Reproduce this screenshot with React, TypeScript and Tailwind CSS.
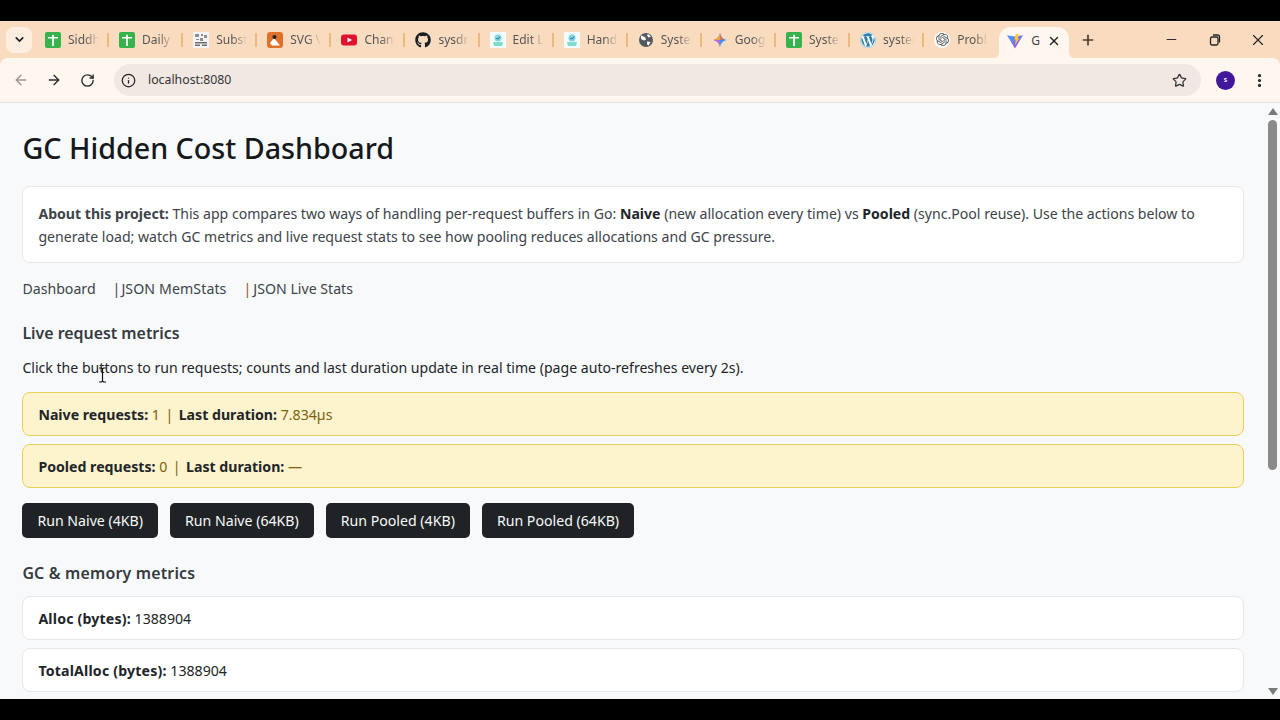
import { ArrowLeft, ArrowRight, RotateCw, Info, Star, EllipsisVertical, ChevronDown, Plus, X, Minus } from "lucide-react";
import { FaGithub, FaWordpress } from "react-icons/fa";
import { SiOpenai } from "react-icons/si";

function Sheet() {
  return (
    <svg width="16" height="16" viewBox="0 0 16 16">
      <rect width="16" height="16" rx="2" fill="#37b24d" />
      <path d="M3 5h4.100V2.800h1.800V5H13v1.600H8.900V14H7.100V6.600H3z" fill="#fff" />
    </svg>
  );
}

function Substack() {
  return (
    <svg width="16" height="16" viewBox="0 0 16 16">
      <rect width="16" height="16" fill="#f4f4f4" />
      <path d="M2 2h4v3H2zM8 2h2v2H8zM11 3h3v3h-3zM3 7h3v1H3zM7 6h3v3H7z" fill="#8d8d8d" />
      <path d="M2 10h12v1.500H2zM2 12.500h5V14H2zM9 12.500h5V14H9z" fill="#6a6f75" />
    </svg>
  );
}

function SvgIcon() {
  return (
    <svg width="16" height="16" viewBox="0 0 16 16">
      <rect width="16" height="16" rx="3" fill="#e0702a" />
      <path d="M3 11 7 6l6 7.500H5z" fill="#fff" />
      <circle cx="7.500" cy="5" r="2" fill="#222" />
    </svg>
  );
}

function YouTube() {
  return (
    <svg width="16" height="16" viewBox="0 0 16 16">
      <rect y="2.500" width="16" height="11" rx="3" fill="#e0102f" />
      <path d="M6.500 5.500 11 8l-4.500 2.500z" fill="#fff" />
    </svg>
  );
}

function Edit() {
  return (
    <svg width="16" height="16" viewBox="0 0 16 16">
      <rect width="16" height="16" fill="#f2fcfc" />
      <circle cx="8" cy="6" r="3.500" fill="#7fd3e2" />
      <path d="M3 10h10l-1 4H4z" fill="#7fdccf" />
      <path d="m6.500 6 1.200 1.200L10 4.800" stroke="#2b5c80" fill="none" />
    </svg>
  );
}

function Globe() {
  return (
    <svg width="16" height="16" viewBox="0 0 16 16">
      <circle cx="8" cy="8" r="7" fill="#55585c" />
      <path d="M3 3.500 7 5l1 2.500-2 1-3-1.500zM9 9.500l3.500.5-2 3.500L9 12.500zM10 2l3 2.500-2.500 1L9 3.500z" fill="#fff" />
    </svg>
  );
}

function Gemini() {
  return (
    <svg width="16" height="16" viewBox="0 0 16 16">
      <path d="M8 1c.5 3.600 2.800 6.300 6.500 7C10.800 8.700 8.500 11.400 8 15 7.500 11.400 5.200 8.700 1.500 8 5.200 7.300 7.500 4.600 8 1z" fill="#3d8ff2" />
      <path d="M8 1C7.500 4.600 5.200 7.300 1.500 8 5.200 8 7.500 8 8 8z" fill="#f2a03a" />
      <path d="M1.500 8C5.200 8.700 7.500 11.400 8 15V8z" fill="#b768dc" />
      <path d="M8 1c.5 3.600 2.800 6.300 4 6.600L8 8z" fill="#e2704a" />
    </svg>
  );
}

function Vite() {
  return (
    <svg width="16" height="16" viewBox="0 0 16 16">
      <defs>
        <linearGradient id="vite" x1="0" y1="0" x2="1" y2="1">
          <stop offset="0" stopColor="#41a6f6" />
          <stop offset="1" stopColor="#b13ee0" />
        </linearGradient>
      </defs>
      <path d="M0 2.200 8 3.500l8-1.300L8 15.500z" fill="url(#vite)" />
      <path d="M9 .8 11.800 1.300 11 6l1.200-.4L8 12l.8-5.500-1.500.3z" fill="#fdc92f" />
    </svg>
  );
}

const tabs = [
  { icon: <Sheet />, title: "Siddhi" },
  { icon: <Sheet />, title: "Daily T" },
  { icon: <Substack />, title: "Substa" },
  { icon: <SvgIcon />, title: "SVG V" },
  { icon: <YouTube />, title: "Chann" },
  { icon: <FaGithub size={16} color="#1b1f23" />, title: "sysdr/" },
  { icon: <Edit />, title: "Edit Le" },
  { icon: <Edit />, title: "Hands" },
  { icon: <Globe />, title: "Syster" },
  { icon: <Gemini />, title: "Googl" },
  { icon: <Sheet />, title: "Syster" },
  {
    icon: (
      <span className="flex h-4 w-4 items-center justify-center rounded-full bg-white">
        <FaWordpress size={16} color="#2d7ea6" />
      </span>
    ),
    title: "systen",
  },
  {
    icon: (
      <span className="flex h-4 w-4 items-center justify-center rounded-full bg-white">
        <SiOpenai size={13} color="#555" />
      </span>
    ),
    title: "Proble",
  },
];

function Card({ children, warn }: { children: React.ReactNode; warn?: boolean }) {
  return (
    <div
      className={
        warn
          ? "h-[44px] rounded-lg border border-[#ecd05e] bg-[#fdf3cc] px-[15px] text-[14.15px] leading-[44px] text-[#7a6210]"
          : "h-[44px] rounded-lg border border-[#e6e8ea] bg-white px-[15px] text-[14.15px] leading-[44px] text-[#212529]"
      }
    >
      {children}
    </div>
  );
}

function RunButton({ label }: { label: string }) {
  return (
    <button className="h-[35px] rounded-[5px] bg-[#1f2326] px-[15px] text-[14.15px] text-[#f8f9fa]">{label}</button>
  );
}

export default function App() {
  return (
    <div className="flex h-screen flex-col overflow-hidden bg-black py-[21px] font-['Noto_Sans',sans-serif]">
      {/* Tab strip */}
      <div className="flex h-[37px] shrink-0 items-center bg-[#f9dcc0]">
        <div className="ml-[6px] mr-[3px] flex h-[26px] w-[26px] items-center justify-center rounded-lg bg-[#fdeee0]">
          <ChevronDown size={13} strokeWidth={3} color="#1f1f1f" />
        </div>
        {tabs.map((t, i) => (
          <div key={i} className="flex h-full w-[74.1px] items-center pl-[10px]">
            <span className="flex h-4 w-4 shrink-0 items-center justify-center">{t.icon}</span>
            <span className="ml-[7px] w-[31px] overflow-hidden whitespace-nowrap text-[12px] text-[#555] [mask-image:linear-gradient(to_right,black_55%,transparent)]">
              {t.title}
            </span>
            {i < tabs.length - 1 && <span className="ml-auto h-[14px] w-[2px] bg-[#eeb97f]" />}
          </div>
        ))}
        <div className="relative ml-[1px] flex h-[31px] w-[70px] items-start self-end rounded-t-xl bg-[#fff6f0] pl-[8px] pt-[6px]">
          <span className="absolute -left-[6px] bottom-0 h-[6px] w-[6px] bg-[radial-gradient(circle_at_0_0,transparent_6px,#fff6f0_6.500px)]" />
          <span className="absolute -right-[6px] bottom-0 h-[6px] w-[6px] bg-[radial-gradient(circle_at_100%_0,transparent_6px,#fff6f0_6.500px)]" />
          <Vite />
          <span className="ml-[8px] text-[12px] leading-[16px] text-[#444]">G</span>
          <X size={14} strokeWidth={2.5} color="#222" className="ml-[7px] mt-px" />
        </div>
        <Plus size={16} strokeWidth={2.5} color="#4a3a2a" className="ml-[11px]" />
        <Minus size={15} strokeWidth={1.5} color="#222" className="ml-[67.5px]" />
        <svg width="14" height="14" viewBox="0 0 14 14" fill="none" stroke="#222" strokeWidth="1.300" className="ml-[29.5px]">
          <rect x="2.500" y="4" width="7.500" height="8" rx="1.500" />
          <path d="M5 2h4.500A2 2 0 0 1 11.500 4v5.500" />
        </svg>
        <X size={18} strokeWidth={1.5} color="#222" className="ml-[27px]" />
      </div>

      {/* Toolbar */}
      <div className="shrink-0 bg-[#f9dcc0]">
        <div className="flex h-[45px] items-center rounded-t-lg border-b border-[#e8e0da] bg-[#fff6f0]">
          <ArrowLeft size={16} strokeWidth={2} color="#9a9592" className="ml-[13px]" />
          <ArrowRight size={16} strokeWidth={2} color="#2b2b2b" className="ml-[17px]" />
          <RotateCw size={15} strokeWidth={2.2} color="#2b2b2b" className="ml-[18px]" />
          <div className="ml-[19px] flex h-[32px] w-[1087px] items-center rounded-full bg-[#f1e8e3] pl-[7px]">
            <Info size={15} strokeWidth={2} color="#222" />
            <span className="ml-[12px] text-[12.3px] text-[#333]">localhost:8080</span>
            <Star size={15} strokeWidth={2} color="#333" className="ml-auto mr-[14.5px]" />
          </div>
          <span className="ml-[15px] flex h-[19px] w-[19px] items-center justify-center rounded-full bg-[#42189a] text-[7px] font-semibold text-white">
            s
          </span>
          <EllipsisVertical size={17} strokeWidth={2.5} color="#222" className="ml-[16px]" />
        </div>
      </div>

      {/* Page */}
      <div className="relative flex min-h-0 flex-1 overflow-hidden bg-[#f8f9fa]">
        <main className="w-[1265px] shrink-0 pl-[22.4px] pr-[21px] pt-[25px] text-[#212529]">
          <h1 className="text-[28.7px] font-medium leading-[40px] text-[#16191c]">GC Hidden Cost Dashboard</h1>

          <div className="mt-[18px] h-[77px] rounded-lg border border-[#e6e8ea] bg-white px-[15px] py-[15px] text-[14.1px] leading-[23px] text-[#3c4349]">
            <strong className="font-bold">About this project:</strong> This app compares two ways of handling
            per-request buffers in Go: <strong className="font-bold text-[#212529]">Naive</strong> (new allocation every
            time) vs <strong className="font-bold text-[#212529]">Pooled</strong> (sync.Pool reuse). Use the actions below
            to generate load; watch GC metrics and live request stats to see how pooling reduces allocations and GC
            pressure.
          </div>

          <nav className="mt-[14px] flex text-[14.15px] leading-[23px] text-[#3c4349]">
            <a className="mr-[17px]">Dashboard</a>
            <span className="mr-[1px]">|</span>
            <a className="mr-[17px] tracking-[0.1px]">JSON MemStats</a>
            <span className="mr-[2px] text-[#8a5a1a]">|</span>
            <a>JSON Live Stats</a>
          </nav>

          <h2 className="mt-[21px] text-[15.9px] font-semibold leading-[24px] text-[#343a40]">Live request metrics</h2>
          <p className="mt-[11px] text-[14.1px] leading-[23px]">
            Click the buttons to run requests; counts and last duration update in real time (page auto-refreshes every
            2s).
          </p>

          <div className="mt-[13px] flex flex-col gap-2">
            <Card warn>
              <strong className="font-bold text-[#212529]">Naive requests:</strong> 1
              <span className="mx-[5.5px]">|</span>
              <strong className="font-bold text-[#212529]">Last duration:</strong> 7.834µs
            </Card>
            <Card warn>
              <strong className="font-bold text-[#212529]">Pooled requests:</strong> 0
              <span className="mx-[5.5px]">|</span>
              <strong className="font-bold text-[#212529]">Last duration:</strong> —
            </Card>
          </div>

          <div className="mt-[15px] flex gap-3">
            <RunButton label="Run Naive (4KB)" />
            <RunButton label="Run Naive (64KB)" />
            <RunButton label="Run Pooled (4KB)" />
            <RunButton label="Run Pooled (64KB)" />
          </div>

          <h2 className="mt-[23px] text-[15.9px] font-semibold leading-[24px] tracking-[0.19px] text-[#343a40]">
            GC &amp; memory metrics
          </h2>

          <div className="mt-[11px] flex flex-col gap-2">
            <Card>
              <strong className="font-bold tracking-[0.18px]">Alloc (bytes):</strong> 1388904
            </Card>
            <Card>
              <strong className="font-bold tracking-[0.18px]">TotalAlloc (bytes):</strong> 1388904
            </Card>
          </div>
        </main>

        {/* Scrollbar */}
        <div className="flex w-[15px] flex-col items-center pt-[5px]">
          <svg width="10" height="7" viewBox="0 0 10 7" className="shrink-0">
            <path d="M5 0l5 7H0z" fill="#7a7a7a" />
          </svg>
          <div className="mt-[5px] h-[350px] w-[9px] shrink-0 rounded-full bg-[#8a8a8a]" />
          <svg width="10" height="7" viewBox="0 0 10 7" className="mt-auto mb-[4px] shrink-0">
            <path d="M5 7 0 0h10z" fill="#7a7a7a" />
          </svg>
        </div>

        {/* Text cursor */}
        <svg width="9" height="16" viewBox="0 0 9 16" className="absolute left-[98px] top-[264px]">
          <path d="M1 1h2.500L4.500 2 5.500 1H8M4.500 2v12M1 15h2.500l1-1 1 1H8" fill="none" stroke="#111" strokeWidth="1.200" />
        </svg>
      </div>
    </div>
  );
}
